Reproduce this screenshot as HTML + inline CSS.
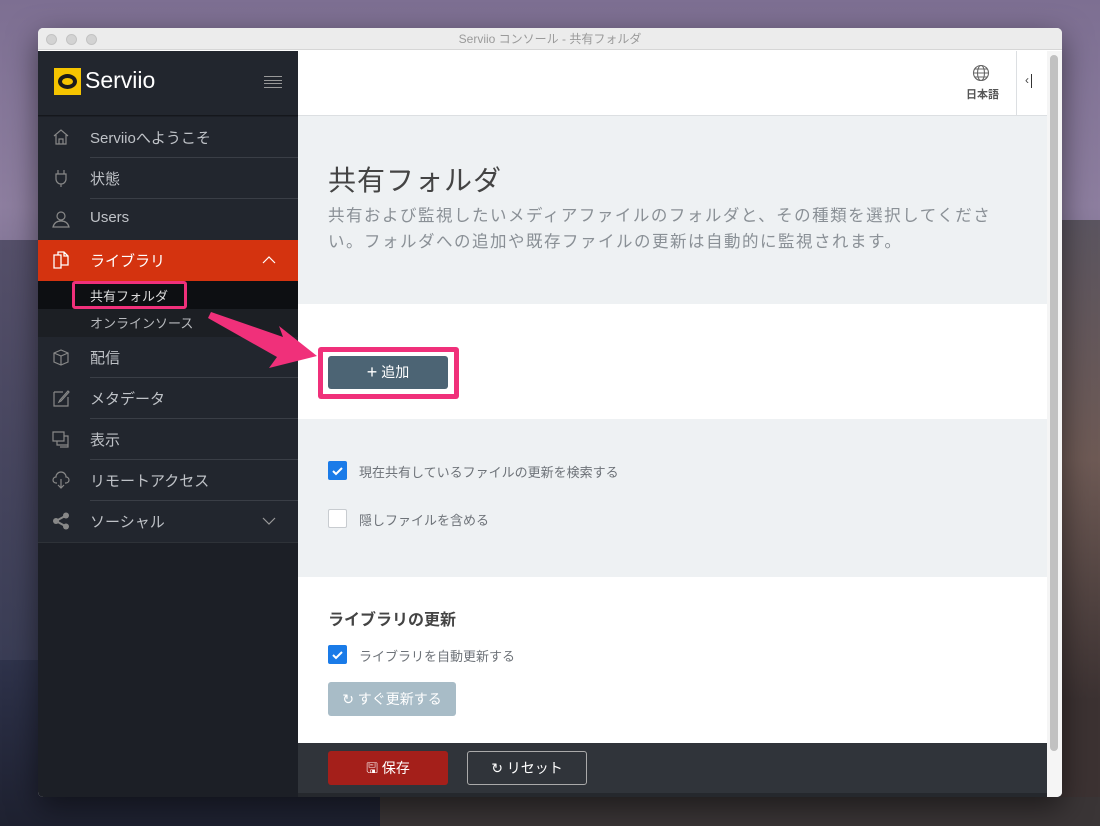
<!DOCTYPE html>
<html><head><meta charset="utf-8"><style>
*{box-sizing:border-box;margin:0;padding:0}
body{width:1100px;height:826px;overflow:hidden;position:relative;font-family:"Liberation Sans","Noto Sans CJK JP",sans-serif;
background:linear-gradient(180deg,#7d6f92 0%,#8d7e9f 25%,#6f6687 45%,#3d4260 65%,#2a2e44 85%,#1e2130 100%);}
.rock{position:absolute;right:0;top:220px;width:40px;height:600px;background:linear-gradient(180deg,#5b5560,#6e5a55 40%,#3c3232 80%)}
.rock2{position:absolute;left:0;top:240px;width:38px;height:420px;background:linear-gradient(180deg,#55506a,#3a3d55)}
.bottomrock{position:absolute;left:380px;top:797px;width:720px;height:29px;background:#3a3536}
.win{position:absolute;left:38px;top:28px;width:1024px;height:769px;background:#fff;border-radius:5px;overflow:hidden;box-shadow:0 10px 30px rgba(0,0,0,.5)}
.tb{height:22px;background:#ececec;border-bottom:1px solid #d6d6d6;text-align:center;font-size:12px;color:#9a9a9a;line-height:22px;position:relative}
.dot{position:absolute;top:6px;width:11px;height:11px;border-radius:50%;background:#d3d3d3;border:1px solid #c3c3c3}
.side{position:absolute;left:0;top:23px;width:260px;bottom:0;background:#1c1f26}
.logo{height:65px;background:#22262e;border-bottom:1px solid #15171c;position:relative}
.item{position:absolute;left:0;width:260px;height:41px;background:#22262e;color:#bfc2c7;font-size:15px}
.item span{position:absolute;left:52px;top:10px}
.item .ln{position:absolute;left:52px;right:0;bottom:0;height:1px;background:#3a3e46}
.item svg{position:absolute;left:14px;top:11px}
.item svg.chev{left:224px;top:16px}
.main{position:absolute;left:260px;top:23px;width:749px;bottom:0;background:#eef1f3}
.hdr{height:65px;background:#fff;border-bottom:1px solid #dcdfe2;position:relative}
.cb{position:absolute;width:19px;height:19px;border-radius:2px}
.on{background:#1a7be8}
.off{background:#fff;border:1px solid #c8ccd0}
.lbl{position:absolute;font-size:13px;color:#6d7278}
</style></head><body>
<div class="rock2"></div><div class="rock"></div><div class="bottomrock"></div>
<div class="win">
 <div class="tb"><div class="dot" style="left:8px"></div><div class="dot" style="left:28px"></div><div class="dot" style="left:48px"></div>Serviio コンソール - 共有フォルダ</div>
 <div class="side">
  <div class="logo">
   <div style="position:absolute;left:16px;top:17px;width:27px;height:27px;background:#f5c400"><div style="position:absolute;left:4px;top:6px;width:19px;height:15px;border-radius:50%;border:4px solid #1b1b1b"></div></div>
   <div style="position:absolute;left:47px;top:16px;color:#fff;font-size:23px">Serviio</div>
   <div style="position:absolute;left:226px;top:25px;width:18px;height:12px;border-top:1px solid #999;border-bottom:1px solid #999"><div style="margin-top:3px;height:4px;border-top:1px solid #999;border-bottom:1px solid #999"></div></div>
  </div>
  <div class="item" style="top:66px"><svg width="18" height="18" fill="none" stroke="#888" stroke-width="1.2"><path d="M2 8L9 2l7 6M4 7v9h10V7M7 16v-5h4v5"/></svg><span>Serviioへようこそ</span><div class="ln"></div></div>
  <div class="item" style="top:107px"><svg width="18" height="18" fill="none" stroke="#888" stroke-width="1.2"><path d="M6 1v4M12 1v4M4 5h10v5a5 5 0 0 1-10 0zM9 15v3"/></svg><span>状態</span><div class="ln"></div></div>
  <div class="item" style="top:148px"><svg width="18" height="18" fill="none" stroke="#888" stroke-width="1.2"><circle cx="9" cy="6" r="4"/><path d="M1 17c1-4 4-6 8-6s7 2 8 6z"/></svg><span>Users</span></div>
  <div class="item" style="top:189px;background:#d4330f;color:#fff"><svg width="18" height="18" fill="none" stroke="#fff" stroke-width="1.3"><path d="M2 4h7v13H2zM6 4V1h6l4 4v9H9M12 1v4h4"/></svg><span>ライブラリ</span><svg class="chev" width="14" height="8" fill="none" stroke="#fff" stroke-width="1.2"><path d="M1 7l6-6 6 6"/></svg></div>
  <div style="position:absolute;top:230px;left:0;width:260px;height:28px;background:#0d0f12"></div>
  <div style="position:absolute;top:258px;left:0;width:260px;height:28px;background:#1c1f24"></div>
  <div style="position:absolute;left:34px;top:230px;width:115px;height:28px;border:3px solid #f0307a;border-radius:3px"></div>
  <div style="position:absolute;left:52px;top:235px;color:#dcdcdc;font-size:13px">共有フォルダ</div>
  <div style="position:absolute;left:52px;top:262px;color:#b8babe;font-size:13px">オンラインソース</div>
  <div class="item" style="top:286px"><svg width="18" height="18" fill="none" stroke="#888" stroke-width="1.2"><path d="M2 5l7-3 7 3v9l-7 3-7-3zM2 5l7 3 7-3M9 8v9"/></svg><span>配信</span><div class="ln"></div></div>
  <div class="item" style="top:327px"><svg width="18" height="18" fill="none" stroke="#888" stroke-width="1.2"><path d="M2 3h9M2 3v14h14V8M8 11l8-9 1 1-8 9-2 1z"/></svg><span>メタデータ</span><div class="ln"></div></div>
  <div class="item" style="top:368px"><svg width="18" height="18" fill="none" stroke="#888" stroke-width="1.2"><path d="M1 2h11v9H1zM5 11v4h11V6h-4M16 15v2H8"/></svg><span>表示</span><div class="ln"></div></div>
  <div class="item" style="top:409px"><svg width="18" height="18" fill="none" stroke="#888" stroke-width="1.2"><path d="M5 12H4a3 3 0 0 1 0-6 5 5 0 0 1 10 0 3 3 0 0 1 0 6h-1M9 8v9M6 14l3 3 3-3"/></svg><span>リモートアクセス</span><div class="ln"></div></div>
  <div class="item" style="top:450px"><svg width="18" height="18" fill="#888"><circle cx="14" cy="3.5" r="3"/><circle cx="4" cy="9" r="3"/><circle cx="14" cy="14.5" r="3"/><path d="M4 9L14 3.5M4 9l10 5.5" stroke="#888" stroke-width="2"/></svg><span>ソーシャル</span><svg class="chev" width="14" height="8" fill="none" stroke="#999" stroke-width="1.2"><path d="M1 1l6 6 6-6"/></svg></div>
  <div style="position:absolute;top:491px;left:0;width:260px;height:1px;background:#2e3238"></div>
 </div>
 <div class="main">
  <div class="hdr">
   <svg style="position:absolute;left:674px;top:13px" width="18" height="18" fill="none" stroke="#666" stroke-width="1.1"><circle cx="9" cy="9" r="7.5"/><ellipse cx="9" cy="9" rx="3.5" ry="7.5"/><path d="M1.5 9h15M3 5h12M3 13h12"/></svg>
   <div style="position:absolute;left:668px;top:35px;font-size:11px;color:#555;font-weight:bold">日本語</div>
   <div style="position:absolute;left:718px;top:0;width:1px;height:65px;background:#dcdfe2"></div>
   <div style="position:absolute;left:727px;top:22px;font-size:12px;color:#444">‹<span style="display:inline-block;width:1px;height:14px;background:#333;vertical-align:middle;margin-left:2px"></span></div>
  </div>
  <div style="position:absolute;left:30px;top:108px;font-size:28px;color:#444;letter-spacing:1px">共有フォルダ</div>
  <div style="position:absolute;left:30px;top:152px;width:680px;font-size:16.5px;letter-spacing:1.5px;color:#8a9096;line-height:26px">共有および監視したいメディアファイルのフォルダと、その種類を選択してください。フォルダへの追加や既存ファイルの更新は自動的に監視されます。</div>
  <div style="position:absolute;left:0;top:253px;width:749px;height:115px;background:#fff"></div>
  <div style="position:absolute;left:20px;top:296px;width:141px;height:52px;background:#f0307a;border-radius:3px"></div>
  <div style="position:absolute;left:25px;top:301px;width:131px;height:42px;background:#fff"></div>
  <div style="position:absolute;left:30px;top:305px;width:120px;height:33px;background:#4c6474;border-radius:3px;color:#fff;font-size:14px;text-align:center;line-height:33px"><span style="font-size:18px;vertical-align:-1px">+</span> 追加</div>
  <div class="cb on" style="left:30px;top:410px"><svg width="19" height="19"><path d="M5 10l3 3 6-6" stroke="#fff" stroke-width="2" fill="none"/></svg></div>
  <div class="lbl" style="left:61px;top:411px">現在共有しているファイルの更新を検索する</div>
  <div class="cb off" style="left:30px;top:458px"></div>
  <div class="lbl" style="left:61px;top:459px">隠しファイルを含める</div>
  <div style="position:absolute;left:0;top:526px;width:749px;height:166px;background:#fff"></div>
  <div style="position:absolute;left:30px;top:555px;font-size:16px;font-weight:bold;color:#444">ライブラリの更新</div>
  <div class="cb on" style="left:30px;top:594px"><svg width="19" height="19"><path d="M5 10l3 3 6-6" stroke="#fff" stroke-width="2" fill="none"/></svg></div>
  <div class="lbl" style="left:61px;top:595px">ライブラリを自動更新する</div>
  <div style="position:absolute;left:30px;top:631px;width:128px;height:34px;background:#a8bcc7;border-radius:3px;color:#fff;font-size:14px;text-align:center;line-height:34px">↻ すぐ更新する</div>
  <div style="position:absolute;left:0;top:692px;width:749px;height:54px;background:#30343a;border-bottom:4px solid #25282d"></div>
  <div style="position:absolute;left:30px;top:700px;width:120px;height:34px;background:#a41f1a;border-radius:3px;color:#fff;font-size:14px;text-align:center;line-height:34px">🖫 保存</div>
  <div style="position:absolute;left:169px;top:700px;width:120px;height:34px;border:1px solid #aaa;border-radius:3px;color:#fff;font-size:14px;text-align:center;line-height:32px">↻ リセット</div>
 </div>
 <div style="position:absolute;left:1009px;top:23px;width:15px;bottom:0;background:#f5f5f5"><div style="margin:4px 3px;width:8px;height:696px;border-radius:4px;background:#c1c1c1"></div></div>
</div>
<svg style="position:absolute;left:205px;top:310px" width="115" height="60"><path d="M3 8L6 2 78 27 74 16 112 46 64 58 72 47z" fill="#f0307a"/></svg>
</body></html>
